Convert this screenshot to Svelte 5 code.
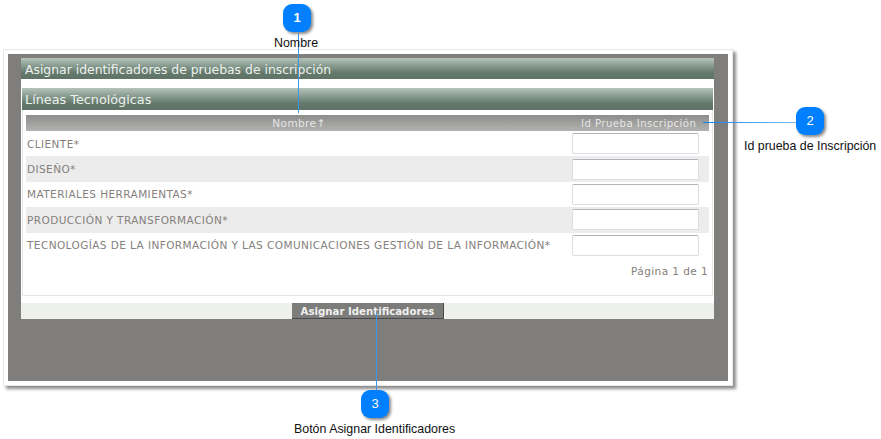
<script>
  const rows = [
    'CLIENTE*',
    'DISEÑO*',
    'MATERIALES HERRAMIENTAS*',
    'PRODUCCIÓN Y TRANSFORMACIÓN*',
    'TECNOLOGÍAS DE LA INFORMACIÓN Y LAS COMUNICACIONES GESTIÓN DE LA INFORMACIÓN*'
  ]
</script>

<div class="page">
  <div class="frame">
    <div class="panel">
      <div class="bar title">Asignar identificadores de pruebas de inscripción</div>
      <div class="section">
        <div class="bar sub">Líneas Tecnológicas</div>
        <div class="content">
          <table>
            <thead>
              <tr>
                <th class="name">Nombre↑</th>
                <th class="id">Id Prueba Inscripción</th>
              </tr>
            </thead>
            <tbody>
              {#each rows as row, i}
                <tr class:alt={i % 2 === 1}>
                  <td class="label">{row}</td>
                  <td class="cell"><input type="text" /></td>
                </tr>
              {/each}
            </tbody>
          </table>
          <div class="pager">Página 1 de 1</div>
        </div>
      </div>
      <div class="footer">
        <button type="button">Asignar Identificadores</button>
      </div>
    </div>
  </div>

  <!-- callouts sit over the screenshot -->
  <div class="line v one"></div>
  <div class="line h two"></div>
  <div class="line v three"></div>
  <div class="badge b1">1</div>
  <div class="badge b2">2</div>
  <div class="badge b3">3</div>
  <div class="note n1">Nombre</div>
  <div class="note n2">Id prueba de Inscripción</div>
  <div class="note n3">Botón Asignar Identificadores</div>
</div>

<style>
  :global(body) {
    background: #fff;
  }

  .page {
    position: relative;
    width: 881px;
    height: 439px;
    padding: 49px 0 0 3px;
    box-sizing: border-box;
    overflow: hidden;
    font-family: "DejaVu Sans", sans-serif;
  }

  .frame {
    padding: 4px 14px 0 13px;
    box-sizing: content-box;
    width: 693px;
    height: 323px;
    background: #7f7e7c;
    border: 5px solid #fff;
    outline: 1px solid #e8e8e8;
    outline-offset: -1px;
    box-shadow: 3px 3px 3px #8d8d8d;
  }

  .panel {
    height: 261px;
    background: #fff;
    display: flex;
    flex-direction: column;
  }

  .bar {
    color: #eef2ee;
    display: flex;
    align-items: center;
    background: linear-gradient(#b6c4bb, #8a9d92 35%, #64796c 70%, #5f7467);
  }

  .title {
    height: 21px;
    padding: 1px 0 0 4px;
    box-sizing: border-box;
    flex: none;
    font-size: 12.4px;
  }

  .section {
    margin: 9px 1px 0;
    display: flex;
    flex-direction: column;
    height: 207px;
    border-bottom: 1px solid #e4e6e4;
  }

  .sub {
    height: 22px;
    padding-left: 3px;
    flex: none;
    font-size: 12.8px;
  }

  .content {
    flex: 1;
    padding: 5px 4px 0 3px;
    border: 1px solid #e6e8e6;
    border-top: none;
    border-bottom: none;
  }

  table {
    width: 683px;
    border-collapse: collapse;
    table-layout: fixed;
    font-size: 10.5px;
    letter-spacing: 0.42px;
  }

  th {
    height: 16px;
    padding: 0;
    font-weight: normal;
    color: #e6e6e6;
    background: linear-gradient(#8d8d8b, #b2b2b0);
  }

  th.id {
    width: 128px;
    text-align: left;
    padding-left: 9px;
    white-space: nowrap;
    font-size: 10.2px;
  }

  td {
    height: 25.4px;
    padding: 0;
  }

  tr.alt td {
    background: #ececec;
  }

  .label {
    color: #85807c;
    padding-left: 1px;
    white-space: nowrap;
  }

  .cell input {
    display: block;
    width: 127px;
    height: 21px;
    box-sizing: border-box;
    margin: 0;
    padding: 0;
    background: #fff;
    border: 1px solid #dcdce4;
    border-top-color: #b4b4bc;
    border-radius: 2px;
  }

  .pager {
    margin-top: 7px;
    text-align: right;
    color: #85807c;
    font-size: 10.5px;
    letter-spacing: 0.42px;
  }

  .footer {
    margin-top: 7px;
    flex: 1;
    background: #eef0ee;
    padding-left: 271px;
  }

  button {
    display: block;
    width: 152px;
    height: 16px;
    padding: 1px 0 0;
    border: none;
    border-bottom: 1px solid #4a4a4a;
    border-right: 1px solid #4a4a4a;
    background: #7c7c7a;
    color: #f0f0f0;
    font-family: "DejaVu Sans", sans-serif;
    font-size: 10.2px;
    font-weight: bold;
    box-sizing: border-box;
  }

  .line {
    position: absolute;
    background: #3a97ea;
  }

  .line.v {
    width: 1px;
  }

  .line.h {
    height: 1px;
  }

  .one {
    left: 298px;
    top: 30px;
    height: 83px;
  }

  .two {
    left: 703px;
    top: 122px;
    width: 94px;
    background: linear-gradient(90deg, #0c83f0, #7fbdf0);
  }

  .three {
    left: 376px;
    top: 313px;
    height: 79px;
  }

  .badge {
    position: absolute;
    width: 28px;
    height: 28px;
    border-radius: 9px;
    background: #0080ff;
    color: #fff;
    font: 13px/28px "Liberation Sans", sans-serif;
    text-align: center;
    box-shadow: 2px 2px 3px #8a8a8a;
  }

  .b1 {
    left: 283px;
    top: 4px;
    font-weight: bold;
  }

  .b2 {
    left: 796px;
    top: 107px;
  }

  .b3 {
    left: 361px;
    top: 390px;
  }

  .note {
    position: absolute;
    color: #111;
    font: 12.4px/14px "Liberation Sans", sans-serif;
    white-space: nowrap;
  }

  .n1 {
    left: 274px;
    top: 36px;
  }

  .n2 {
    left: 744px;
    top: 139px;
  }

  .n3 {
    left: 294px;
    top: 422px;
  }
</style>
